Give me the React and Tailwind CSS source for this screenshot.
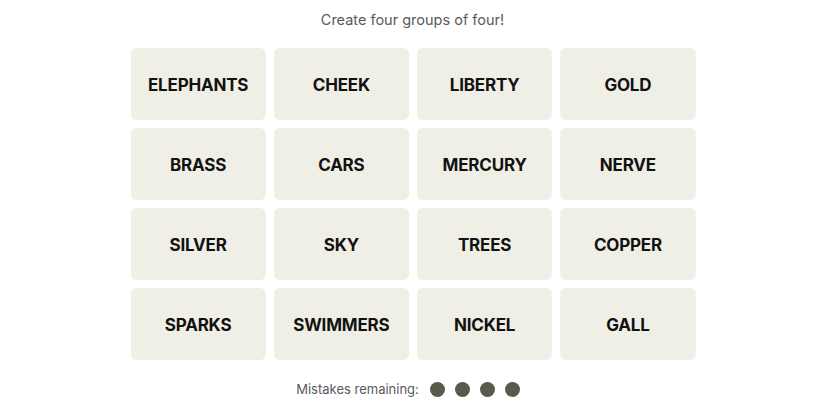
const words = [
  "ELEPHANTS", "CHEEK", "LIBERTY", "GOLD",
  "BRASS", "CARS", "MERCURY", "NERVE",
  "SILVER", "SKY", "TREES", "COPPER",
  "SPARKS", "SWIMMERS", "NICKEL", "GALL",
];

export default function App() {
  return (
    <div className="flex min-h-screen w-full flex-col items-center bg-white font-['Inter','Liberation_Sans',sans-serif]">
      {/* Prompt */}
      <p className="mt-[10px] h-[20px] text-[14.5px] leading-[20px] text-[#5a5a5a]">
        Create four groups of four!
      </p>

      {/* Board */}
      <div className="mt-[18px] grid w-[566px] grid-cols-4 gap-[8px] pl-[1px]">
        {words.map((w) => (
          <button
            key={w}
            className="flex h-[72px] items-center justify-center rounded-[6px] bg-[#efefe6] pt-[3px] text-[17px] font-bold tracking-[-0.2px] text-[#121212]"
          >
            {w}
          </button>
        ))}
      </div>

      {/* Mistakes */}
      <div className="mt-[19px] flex items-center pr-[9px]">
        <span className="text-[13px] leading-[20px] text-[#5a5a5a]">Mistakes remaining:</span>
        <div className="ml-[11px] flex gap-[10px]">
          {[0, 1, 2, 3].map((i) => (
            <span key={i} className="h-[15px] w-[15px] rounded-full bg-[#5a594e]" />
          ))}
        </div>
      </div>
    </div>
  );
}
